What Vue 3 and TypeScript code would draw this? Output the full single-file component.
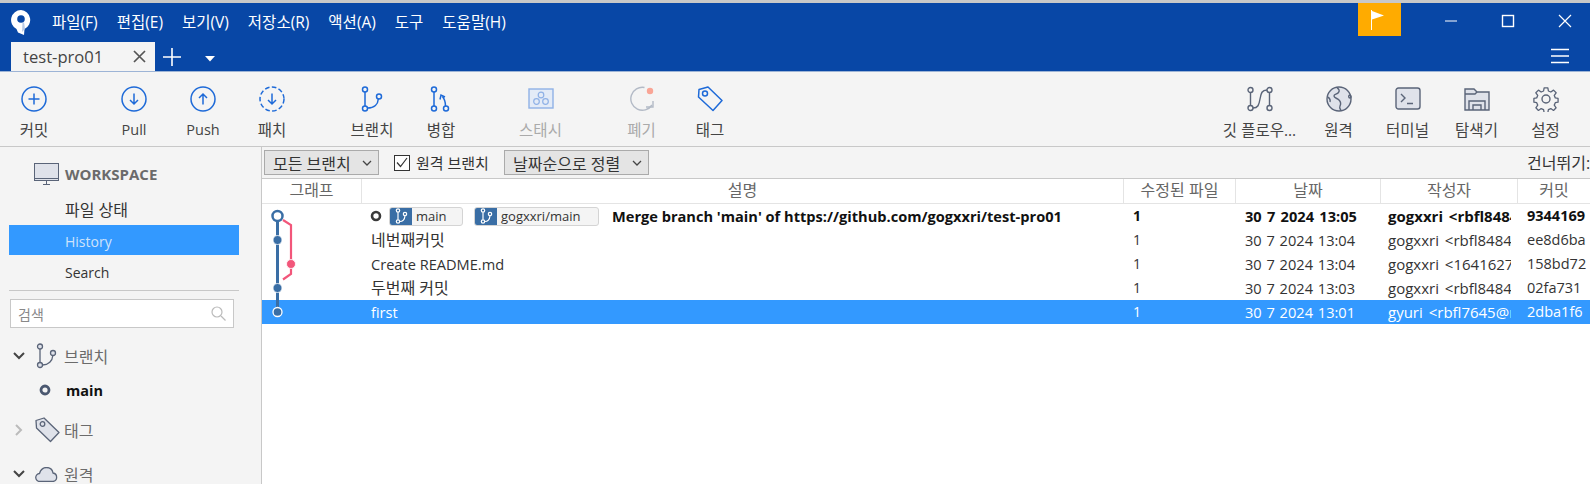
<script setup lang="ts">
interface Row { msg: string; files: string; date: string; author: string; hash: string; bold?: boolean; selected?: boolean; refs?: boolean }
const menus: string[] = ['파일(F)', '편집(E)', '보기(V)', '저장소(R)', '액션(A)', '도구', '도움말(H)']
const rows: Row[] = [
  { msg: "Merge branch 'main' of https://github.com/gogxxri/test-pro01", files: '1', date: '30 7 2024 13:05', author: 'gogxxri <rbfl84845@gmail.com>', hash: '9344169', bold: true, refs: true },
  { msg: '네번째커밋', files: '1', date: '30 7 2024 13:04', author: 'gogxxri <rbfl84845@gmail.com>', hash: 'ee8d6ba' },
  { msg: 'Create README.md', files: '1', date: '30 7 2024 13:04', author: 'gogxxri <164162750+gogxxri>', hash: '158bd72' },
  { msg: '두번째 커밋', files: '1', date: '30 7 2024 13:03', author: 'gogxxri <rbfl84845@gmail.com>', hash: '02fa731' },
  { msg: 'first', files: '1', date: '30 7 2024 13:01', author: 'gyuri <rbfl7645@naver.com>', hash: '2dba1f6', selected: true }
]
const isHangul = (s: string): boolean => /[가-힣]/.test(s)
</script>

<template>
  <div class="app">
    <header class="titlebar">
      <div class="menurow">
        <svg class="logo" width="20" height="25" viewBox="0 0 20 25"><path d="M10 0a10 10 0 0 0-4.500 18.900L7 22.500l6 2.500.500-6A10 10 0 0 0 10 0z" fill="#fff"/><circle cx="10" cy="9" r="3.800" fill="#0847a6"/><path d="M13 12l1 7-3 3 .5-9z" fill="#b9cbe6"/></svg>
        <nav class="menus"><span v-for="m in menus" :key="m">{{ m }}</span></nav>
        <div class="flag"><svg width="16" height="20" viewBox="0 0 16 20"><path d="M1.500 0v20" stroke="#fff"/><path d="M2 1l12 4.500L2 9.500z" fill="#fff"/></svg></div>
        <div class="winbtns">
          <svg width="14" height="14" viewBox="0 0 14 14"><path d="M1 7h12" stroke="#fff" stroke-width="1"/></svg>
          <svg width="14" height="14" viewBox="0 0 14 14"><rect x="1.500" y="1.500" width="11" height="11" fill="none" stroke="#fff" stroke-width="1.400"/></svg>
          <svg width="14" height="14" viewBox="0 0 14 14"><path d="M1 1l12 12M13 1L1 13" stroke="#fff" stroke-width="1.200"/></svg>
        </div>
      </div>
      <div class="tabrow">
        <div class="tab"><span>test-pro01</span><svg width="13" height="13" viewBox="0 0 13 13"><path d="M1 1l11 11M12 1L1 12" stroke="#555" stroke-width="1.700"/></svg></div>
        <svg class="plus" width="18" height="18" viewBox="0 0 18 18"><path d="M9 0v18M0 9h18" stroke="#fff" stroke-width="1.600"/></svg>
        <svg class="caret" width="10" height="6" viewBox="0 0 10 6"><path d="M0 0h10L5 5.500z" fill="#fff"/></svg>
        <svg class="burger" width="18" height="16" viewBox="0 0 18 16"><path d="M0 1.500h18M0 8h18M0 14.500h18" stroke="#fff" stroke-width="1.300"/></svg>
      </div>
    </header>

    <section class="toolbar">
      <div class="tb-left">
        <div class="tool w68"><svg width="26" height="26" viewBox="0 0 26 26" class="ic"><circle cx="13" cy="13" r="12"/><path d="M13 7.500v11M7.500 13h11"/></svg><span>커밋</span></div>
        <div class="group g-sync">
          <div class="tool w66 lat"><svg width="26" height="26" viewBox="0 0 26 26" class="ic"><circle cx="13" cy="13" r="12"/><path d="M13 7.500v10.500M9 14l4 4 4-4"/></svg><span>Pull</span></div>
          <div class="tool w72 lat"><svg width="26" height="26" viewBox="0 0 26 26" class="ic"><circle cx="13" cy="13" r="12"/><path d="M13 18.500V8M9 12l4-4 4 4"/></svg><span>Push</span></div>
          <div class="tool w66"><svg width="26" height="26" viewBox="0 0 26 26" class="ic"><circle cx="13" cy="13" r="12" stroke-dasharray="4.600 2.400"/><path d="M13 7.500v10.500M9 14l4 4 4-4"/></svg><span>패치</span></div>
        </div>
        <div class="group g-branch">
          <div class="tool w68"><svg width="26" height="26" viewBox="0 0 26 26" class="ic"><circle cx="6" cy="3.500" r="2.500"/><circle cx="6" cy="22.500" r="2.500"/><circle cx="20" cy="10.500" r="2.500"/><path d="M6 6v14M8.500 22c7 0 10.500-4 10.800-9"/></svg><span>브랜치</span></div>
          <div class="tool w70"><svg width="26" height="26" viewBox="0 0 26 26" class="ic"><circle cx="6" cy="3.500" r="2.500"/><circle cx="6" cy="22.500" r="2.500"/><circle cx="18" cy="22.500" r="2.500"/><path d="M6 6v14M17.500 20c0-4-1-7-3-9.500M12 13.500l1-4.500 4 2"/></svg><span>병합</span></div>
        </div>
        <div class="group g-stash">
          <div class="tool dim"><svg width="26" height="22" viewBox="0 0 26 22" class="ic2"><rect x="1" y="1" width="24" height="19" fill="#e3ebf7" stroke="#8fb1e6" stroke-width="1.400"/><circle cx="13" cy="7" r="2.800" fill="none" stroke="#8fb1e6" stroke-width="1.200"/><circle cx="8.500" cy="13.500" r="2.800" fill="none" stroke="#8fb1e6" stroke-width="1.200"/><circle cx="17.500" cy="13.500" r="2.800" fill="none" stroke="#8fb1e6" stroke-width="1.200"/></svg><span>스태시</span></div>
        </div>
        <div class="group g-discard">
          <div class="tool dim"><svg width="26" height="26" viewBox="0 0 26 26" class="ic2"><path d="M15.500 1.500A11.500 11.500 0 1 0 23 19" fill="none" stroke="#b3bac6" stroke-width="1.400"/><path d="M16 20h7v-6" fill="none" stroke="#b3bac6" stroke-width="1.400" transform="translate(1 1)"/><circle cx="21" cy="5" r="3.200" fill="#f9a596"/></svg><span>폐기</span></div>
          <div class="tool w70"><svg width="26" height="26" viewBox="0 0 26 26" class="ic"><path d="M2 3.500 11 1l14 13.500-9 10L1.500 11z" stroke-linejoin="round"/><circle cx="8" cy="7.500" r="2.500"/></svg><span>태그</span></div>
        </div>
      </div>
      <div class="tb-right">
        <div class="tool w89"><svg width="26" height="26" viewBox="0 0 26 26" class="ig"><circle cx="3.500" cy="4" r="2.500"/><circle cx="3.500" cy="22" r="2.500"/><circle cx="22.500" cy="4" r="2.500"/><circle cx="22.500" cy="22" r="2.500"/><path d="M3.500 6.500v13M22.500 6.500v13M6 22c5 0 6-3 7-9s2-9 7-9"/></svg><span>깃 플로우...</span></div>
        <div class="tool w69"><svg width="26" height="26" viewBox="0 0 26 26" class="ig"><circle cx="13" cy="13" r="12" fill="#dfe2ea"/><path d="M11 1.500c2 2 3 3 1.500 5S8 8 8 10s3 2 5 4 2 4 1 6 0 3 1 4.500M24 9c-2 .5-1.500 3 0 3s1.500-2 0-3z" fill="none"/><path d="M1.500 11c2 1 3 3 2.500 5" fill="none"/></svg><span>원격</span></div>
        <div class="tool w69"><svg width="26" height="24" viewBox="0 0 26 24" class="ig"><rect x="1" y="1" width="24" height="21" rx="2.500" fill="#dfe2ea"/><path d="M6 7l4 4-4 4M12 16.500h6" fill="none"/></svg><span>터미널</span></div>
        <div class="tool w69"><svg width="26" height="24" viewBox="0 0 26 24" class="ig"><path d="M1 23V2h9l3 3h12v18z" fill="#dfe2ea"/><path d="M1 7h10l2-2" fill="none"/><path d="M5 23v-9h16v9M9 23v-5h8v5" fill="none" stroke-width="1.800"/></svg><span>탐색기</span></div>
        <div class="tool w69"><svg width="26" height="26" viewBox="0 0 26 26" class="ig"><circle cx="13" cy="13" r="4"/><path d="M11 1h4l.6 3.400 2.600 1.100 2.900-2 2.800 2.800-2 2.900 1.100 2.600 3 .6v4l-3 .6-1.100 2.600 2 2.900-2.800 2.800-2.900-2-2.600 1.100-.6 3.400h-4l-.6-3.400-2.600-1.100-2.900 2-2.800-2.800 2-2.900-1.100-2.600-3-.6v-4l3-.6 1.100-2.600-2-2.900 2.800-2.800 2.900 2 2.600-1.100z" stroke-linejoin="round" transform="translate(.9 .9) scale(.93)"/></svg><span>설정</span></div>
      </div>
    </section>

    <div class="body">
      <aside class="sidebar">
        <div class="ws">
          <svg width="25" height="22" viewBox="0 0 25 22"><rect x=".5" y=".5" width="24" height="17" fill="#dfe2ea" stroke="#5a6478"/><path d="M.5 15.500h24M9 21.500h7M12.500 18v3" stroke="#5a6478" fill="none"/></svg>
          <b>WORKSPACE</b>
        </div>
        <div class="navitem kr">파일 상태</div>
        <div class="navitem active">History</div>
        <div class="navitem low">Search</div>
        <div class="divider"></div>
        <div class="search"><span>검색</span><svg width="15" height="15" viewBox="0 0 15 15"><circle cx="6" cy="6" r="5" fill="none" stroke="#bbb" stroke-width="1.200"/><path d="M10 10l4.500 4.500" stroke="#bbb" stroke-width="1.200"/></svg></div>
        <div class="sec s-branch">
          <svg class="chev" width="12" height="8" viewBox="0 0 12 8"><path d="M1 1l5 5 5-5" fill="none" stroke="#444" stroke-width="2"/></svg>
          <svg width="22" height="26" viewBox="0 0 22 26" class="is"><circle cx="5" cy="3.500" r="2.500" fill="#dfe2ea"/><circle cx="5" cy="22" r="2.500" fill="#dfe2ea"/><circle cx="18" cy="10" r="2.500" fill="#dfe2ea"/><path d="M5 6v13.500M7.500 22c6 0 10-4 10.300-9.500" fill="none"/></svg>
          <span>브랜치</span>
        </div>
        <div class="branch"><svg width="12" height="12" viewBox="0 0 12 12"><circle cx="6" cy="6" r="4" fill="none" stroke="#4b5870" stroke-width="2.800"/></svg><b>main</b></div>
        <div class="sec s-tag">
          <svg class="chev" width="8" height="12" viewBox="0 0 8 12"><path d="M1 1l5 5-5 5" fill="none" stroke="#bbb" stroke-width="2"/></svg>
          <svg width="26" height="26" viewBox="0 0 26 26" class="is"><path d="M1 3.500 9 1l15 14.500-8.500 9L1.500 11z" fill="#dfe2ea" stroke-linejoin="round"/><circle cx="7.500" cy="7" r="2.300" fill="none"/></svg>
          <span>태그</span>
        </div>
        <div class="sec s-remote">
          <svg class="chev" width="12" height="8" viewBox="0 0 12 8"><path d="M1 1l5 5 5-5" fill="none" stroke="#444" stroke-width="2"/></svg>
          <svg width="23" height="15" viewBox="0 0 23 15" class="is"><path d="M5 14.500a4 4 0 0 1-.5-8C5.500 3 8 .5 11.500.5c3.500 0 6 2.500 6.500 5.500a4.300 4.300 0 0 1 0 8.500z" fill="#dfe2ea"/></svg>
          <span>원격</span>
        </div>
      </aside>

      <main class="main">
        <div class="filters">
          <div class="select s1">모든 브랜치<svg width="10" height="6" viewBox="0 0 10 6"><path d="M1 1l4 4 4-4" fill="none" stroke="#444" stroke-width="1.300"/></svg></div>
          <label class="check"><span class="box"><svg width="12" height="11" viewBox="0 0 12 11"><path d="M1 5.500l3.500 4L11 1" fill="none" stroke="#333" stroke-width="1.200"/></svg></span>원격 브랜치</label>
          <div class="select s2">날짜순으로 정렬<svg width="10" height="6" viewBox="0 0 10 6"><path d="M1 1l4 4 4-4" fill="none" stroke="#444" stroke-width="1.300"/></svg></div>
          <div class="skip">건너뛰기:</div>
        </div>

        <div class="table">
          <div class="grid head">
            <div>그래프</div><div>설명</div><div>수정된 파일</div><div>날짜</div><div>작성자</div><div>커밋</div>
          </div>
          <div v-for="r in rows" :key="r.hash" class="grid row" :class="{ bold: r.bold, selected: r.selected }">
            <div class="c-graph"></div>
            <div class="c-msg">
              <template v-if="r.refs">
                <svg class="headdot" width="12" height="12" viewBox="0 0 12 12"><circle cx="6" cy="6" r="4" fill="none" stroke="#3a3a3a" stroke-width="2.600"/></svg>
                <span class="ref r1"><i><svg width="14" height="16" viewBox="0 0 14 16"><circle cx="4" cy="2.500" r="1.700"/><circle cx="4" cy="13.500" r="1.700"/><circle cx="11" cy="6" r="1.700"/><path d="M4 4.200v7.600M5.700 13.500c3 0 5-2.500 5.300-5.800"/></svg></i><em>main</em></span>
                <span class="ref r2"><i><svg width="14" height="16" viewBox="0 0 14 16"><circle cx="4" cy="2.500" r="1.700"/><circle cx="4" cy="13.500" r="1.700"/><circle cx="11" cy="6" r="1.700"/><path d="M4 4.200v7.600M5.700 13.500c3 0 5-2.500 5.300-5.800"/></svg></i><em>gogxxri/main</em></span>
              </template>
              <span class="msg" :class="{ kr: isHangul(r.msg) }">{{ r.msg }}</span>
            </div>
            <div class="c-files">{{ r.files }}</div>
            <div class="c-date">{{ r.date }}</div>
            <div class="c-author">{{ r.author }}</div>
            <div class="c-hash">{{ r.hash }}</div>
          </div>
          <svg class="graph" width="60" height="130" viewBox="0 0 60 130">
            <path d="M21 16l8 5v49l-8 5.500" fill="none" stroke="#f2567a" stroke-width="2.200"/>
            <path d="M15.500 12v96" stroke="#3a6ea5" stroke-width="3"/>
            <circle cx="15.500" cy="12" r="5" fill="#fff" stroke="#3a6ea5" stroke-width="2.500"/>
            <circle cx="15.500" cy="36" r="4.500" fill="#3a6ea5" stroke="#fff" stroke-width=".8"/>
            <circle cx="29" cy="60" r="4.500" fill="#f2567a" stroke="#fff" stroke-width=".8"/>
            <circle cx="15.500" cy="84" r="4.500" fill="#3a6ea5" stroke="#fff" stroke-width=".8"/>
            <circle cx="15.500" cy="108" r="4.500" fill="#3a6ea5" stroke="#fff" stroke-width="1.300"/>
          </svg>
        </div>
      </main>
    </div>
  </div>
</template>

<style>
html, body { margin: 0; background: #f4f4f4; overflow: hidden; }
</style>

<style scoped>
.app { width: 1590px; height: 484px; overflow: hidden; display: flex; flex-direction: column; font-family: "Open Sans", "Noto Sans CJK KR", sans-serif; font-size: 14px; color: #333; background: #f4f4f4; border-top: 3px solid #c8c8c8; box-sizing: border-box; }
.titlebar { background: #0847a6; height: 69px; flex: none; color: #fff; border-bottom: 1px solid #9db4d6; box-sizing: border-box; }
.menurow { height: 39px; display: flex; align-items: flex-start; position: relative; }
.logo { margin: 7px 0 0 11px; }
.menus { display: flex; gap: 19px; margin: 9px 0 0 21px; font-size: 15.5px; line-height: 20px; }
.flag { position: absolute; left: 1358px; top: 0; width: 43px; height: 33px; background: #ffab00; display: flex; align-items: center; justify-content: center; padding-right: 3px; box-sizing: border-box; }
.winbtns { position: absolute; left: 1444px; top: 11px; display: flex; gap: 43px; }
.tabrow { height: 29px; display: flex; align-items: center; position: relative; }
.tab { margin-left: 11px; width: 144px; height: 29px; box-sizing: border-box; background: #f4f4f4; color: #444; font-size: 16.6px; display: flex; align-items: center; padding: 0 9px 0 12px; justify-content: space-between; }
.plus { margin-left: 8px; }
.caret { margin-left: 24px; margin-top: 4px; }
.burger { position: absolute; left: 1551px; top: 6px; }
.toolbar { height: 75px; flex: none; display: flex; justify-content: space-between; border-bottom: 1px solid #c8c8c8; box-sizing: border-box; padding-right: 10px; }
.tb-left, .tb-right, .group { display: flex; }
.tool { width: 67px; display: flex; flex-direction: column; align-items: center; padding-top: 14px; box-sizing: border-box; font-size: 15.5px; color: #444; }
.tool.lat { font-size: 14.5px; }
.tool svg { height: 26px; flex: none; }
.tool span { margin-top: 8px; line-height: 20px; white-space: nowrap; }
.w68 { width: 68px; } .w66 { width: 66px; } .w69 { width: 69px; } .w70 { width: 70px; } .w72 { width: 72px; } .w89 { width: 89px; }
.g-sync { margin-left: 33px; } .g-branch { margin-left: 33px; } .g-stash { margin-left: 31px; } .g-discard { margin-left: 34px; }
.dim { color: #aaa; }
.ic * { fill: none; stroke: #1e6ad8; stroke-width: 1.500; }
.ig * { stroke: #5a6478; stroke-width: 1.400; }
.ig > path:not([fill]), .ig > circle:not([fill]) { fill: none; }
.body { flex: 1; display: flex; min-height: 0; }
.sidebar { width: 261px; flex: none; border-right: 1px solid #c8c8c8; padding-top: 11px; }
.ws { display: flex; align-items: center; height: 32px; padding-left: 34px; gap: 6px; margin-bottom: 5px; }
.ws b { font-size: 15px; color: #6b6b6b; font-weight: 700; }
.navitem { margin: 0 22px 0 9px; height: 30px; line-height: 33px; padding-left: 56px; color: #333; font-size: 14px; }
.navitem.kr { font-size: 16px; line-height: 30px; }
.navitem.low { line-height: 35px; }
.navitem.active { background: #3399ff; color: #cfe3fb; }
.divider { height: 1px; background: #c8c8c8; margin: 5px 22px 8px 9px; }
.search { margin: 0 27px 0 10px; height: 29px; box-sizing: border-box; background: #fff; border: 1px solid #c8c8c8; display: flex; align-items: center; justify-content: space-between; padding: 0 7px; color: #888; font-size: 14px; }
.sec { display: flex; align-items: center; color: #6b6b6b; font-size: 16px; position: relative; height: 30px; padding-left: 64px; }
.sec .chev { position: absolute; left: 13px; }
.s-tag .chev { left: 15px; }
.sec .is { position: absolute; left: 35px; }
.is * { stroke: #5a6478; stroke-width: 1.300; }
.s-branch { margin-top: 13px; }
.s-tag { margin-top: 10px; }
.s-remote { margin-top: 14px; }
.branch { display: flex; align-items: center; height: 30px; margin-top: 4px; padding-left: 39px; gap: 15px; }
.branch b { color: #111; font-size: 14.5px; }
.main { flex: 1; min-width: 0; display: flex; flex-direction: column; }
.filters { height: 31px; flex: none; display: flex; align-items: center; padding-left: 2px; font-size: 16px; position: relative; }
.select { height: 25px; box-sizing: border-box; background: #e4e4e4; border: 1px solid #aaa; display: flex; align-items: center; justify-content: space-between; padding: 0 6px 0 8px; color: #333; white-space: nowrap; }
.s1 { width: 115px; } .s2 { width: 145px; }
.check { display: flex; align-items: center; margin-left: 15px; gap: 6px; width: 110px; white-space: nowrap; font-size: 15px; }
.box { width: 16px; height: 16px; flex: none; box-sizing: border-box; border: 1px solid #333; background: #fff; display: flex; align-items: center; justify-content: center; }
.skip { position: absolute; left: 1265px; top: 3px; white-space: nowrap; }
.table { flex: 1; background: #fff; border-top: 1px solid #c8c8c8; position: relative; }
.grid { display: grid; grid-template-columns: 100px 762px 112px 145px 137px 72px; }
.head { height: 25px; border-bottom: 1px solid #e4e4e4; box-sizing: border-box; background: #fff; color: #666; font-size: 16px; line-height: 23px; text-align: center; }
.head > div { border-right: 1px solid #e4e4e4; box-sizing: border-box; }
.head > div:last-child { border-right: 0; }
.row { height: 24px; line-height: 24px; font-size: 14px; color: #333; }
.row > div { white-space: nowrap; overflow: hidden; }
.row.bold { color: #111; font-weight: 700; }
.row.selected { background: #3399ff; color: #fff; }
.c-msg { padding-left: 9px; display: flex; align-items: center; font-size: 14.6px; }
.msg.kr { font-size: 16px; }
.c-files { padding-left: 9px; }
.c-date { padding-left: 9px; font-size: 14.6px; word-spacing: 1px; }
.bold .c-date { font-size: 14.6px; word-spacing: 1.5px; }
.c-author { padding-left: 7px; margin-right: 7px; font-size: 15px; word-spacing: 2px; }
.c-hash { padding-left: 9px; font-size: 14.5px; }
.headdot { flex: none; margin-left: -1px; }
.ref { display: flex; height: 19px; box-sizing: border-box; border: 1px solid #d4d4d4; border-radius: 3px; background: #f4f4f4; font-weight: 400; overflow: hidden; flex: none; font-size: 13px; }
.ref i { width: 22px; height: 17px; background: #3a6ea5; display: flex; align-items: center; justify-content: center; }
.ref i svg * { fill: none; stroke: #fff; stroke-width: 1.200; }
.ref em { font-style: normal; color: #333; padding-left: 4px; line-height: 17px; }
.r1 { width: 74px; margin-left: 7px; } .r2 { width: 125px; margin-left: 11px; }
.r2 + .msg { margin-left: 13px; }
.graph { position: absolute; left: 0; top: 25px; pointer-events: none; }
</style>
